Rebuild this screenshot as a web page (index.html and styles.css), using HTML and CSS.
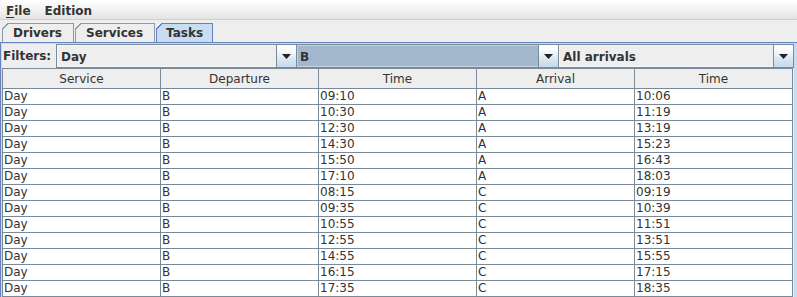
FILE: index.html
```html
<!DOCTYPE html>
<html lang="en">
<head>
    <meta charset="UTF-8">
    <title>Tasks</title>
    <link rel="stylesheet" href="styles.css">
</head>
<body>
    <div class="menubar">
        <span class="menu"><u>F</u>ile</span>
        <span class="menu">Edition</span>
    </div>

    <div class="tabs">
        <div class="tab">Drivers</div>
        <div class="tab">Services</div>
        <div class="tab selected">Tasks</div>
    </div>

    <div class="panel">
        <div class="content-area">
            <div class="filters">
                <span class="filter-label">Filters:</span>
                <div class="combo combo-service">
                    <span class="combo-text">Day</span>
                    <span class="combo-arrow"><svg width="9" height="5" viewBox="0 0 9 5"><path d="M0 0h9L4.5 5z" fill="#222"/></svg></span>
                </div>
                <div class="combo combo-departure focused">
                    <span class="combo-text">B</span>
                    <span class="combo-arrow"><svg width="9" height="5" viewBox="0 0 9 5"><path d="M0 0h9L4.5 5z" fill="#222"/></svg></span>
                </div>
                <div class="combo combo-arrival">
                    <span class="combo-text">All arrivals</span>
                    <span class="combo-arrow"><svg width="9" height="5" viewBox="0 0 9 5"><path d="M0 0h9L4.5 5z" fill="#222"/></svg></span>
                </div>
            </div>

            <table class="task-table">
                <colgroup>
                    <col><col><col><col><col>
                </colgroup>
                <thead>
                    <tr>
                        <th>Service</th>
                        <th>Departure</th>
                        <th>Time</th>
                        <th>Arrival</th>
                        <th>Time</th>
                    </tr>
                </thead>
                <tbody>
                    <tr><td>Day</td><td>B</td><td>09:10</td><td>A</td><td>10:06</td></tr>
                    <tr><td>Day</td><td>B</td><td>10:30</td><td>A</td><td>11:19</td></tr>
                    <tr><td>Day</td><td>B</td><td>12:30</td><td>A</td><td>13:19</td></tr>
                    <tr><td>Day</td><td>B</td><td>14:30</td><td>A</td><td>15:23</td></tr>
                    <tr><td>Day</td><td>B</td><td>15:50</td><td>A</td><td>16:43</td></tr>
                    <tr><td>Day</td><td>B</td><td>17:10</td><td>A</td><td>18:03</td></tr>
                    <tr><td>Day</td><td>B</td><td>08:15</td><td>C</td><td>09:19</td></tr>
                    <tr><td>Day</td><td>B</td><td>09:35</td><td>C</td><td>10:39</td></tr>
                    <tr><td>Day</td><td>B</td><td>10:55</td><td>C</td><td>11:51</td></tr>
                    <tr><td>Day</td><td>B</td><td>12:55</td><td>C</td><td>13:51</td></tr>
                    <tr><td>Day</td><td>B</td><td>14:55</td><td>C</td><td>15:55</td></tr>
                    <tr><td>Day</td><td>B</td><td>16:15</td><td>C</td><td>17:15</td></tr>
                    <tr><td>Day</td><td>B</td><td>17:35</td><td>C</td><td>18:35</td></tr>
                </tbody>
            </table>
        </div>
    </div>
</body>
</html>
```

FILE: styles.css
```css
body {
    margin: 0;
    font-family: 'DejaVu Sans', Verdana, sans-serif;
    font-size: 12px;
    color: #333;
    background-color: #eeeeee;
    height: 297px;
    overflow: hidden;
}

.menubar {
    display: flex;
    align-items: center;
    height: 19px;
    padding-left: 0;
    background: linear-gradient(#ffffff, #e4e4e4);
    border-bottom: 1px solid #cfcfcf;
}

.menu {
    font-weight: bold;
    padding: 2px 7px 0 6px;
    margin-right: 1px;
}

.menu u {
    text-decoration-thickness: 1px;
    text-underline-offset: 2px;
}

.tabs {
    display: flex;
    padding: 3px 0 0 2px;
    height: 19px;
}

.tab {
    position: relative;
    height: 18px;
    line-height: 18px;
    padding: 0 11px 0 10px;
    margin-right: 1px;
    font-weight: bold;
    border: 1px solid #8e9aa5;
    border-bottom: none;
    background: #eeeeee;
}

/* cut top-left corner like the metal tabs */
.tab::before {
    content: "";
    position: absolute;
    left: -1px;
    top: -1px;
    width: 6px;
    height: 6px;
    background: linear-gradient(to bottom right, #eeeeee 0, #eeeeee 45%, #8e9aa5 46%, #8e9aa5 60%, transparent 61%);
}

.tab.selected {
    background: #c8ddf2;
    border-color: #6382bf;
    padding: 0 9px 0 9px;
}

.tab.selected::before {
    background: linear-gradient(to bottom right, #eeeeee 0, #eeeeee 45%, #6382bf 46%, #6382bf 60%, transparent 61%);
}

.panel {
    border-top: 1px solid #6382bf;
    border-left: 1px solid #6382bf;
}

.content-area {
    border-top: 1px solid #c8ddf2;
    border-left: 1px solid #c8ddf2;
    border-right: 3px solid #c8ddf2;
    margin-right: 0;
}

.filters {
    display: flex;
    align-items: stretch;
    height: 24px;
}

.filter-label {
    width: 53px;
    font-weight: bold;
    line-height: 24px;
    padding-left: 1px;
}

.combo {
    display: flex;
    box-sizing: border-box;
    border: 1px solid #7a8a99;
    background: #eeeeee;
    font-weight: bold;
}

.combo-service {
    width: 241px;
}

.combo-departure {
    width: 262px;
    border-left: none;
}

.combo-arrival {
    width: 235px;
    border-left: none;
}

.combo-text {
    flex: 1;
    line-height: 22px;
    padding-left: 3px;
    border: 1px solid #f8f8f8;
    border-right: none;
}

.combo.focused .combo-text {
    background: #a3b8cc;
    border-color: #c4d2df;
    padding-left: 2px;
}

.combo-arrow {
    display: flex;
    align-items: center;
    justify-content: center;
    width: 19px;
    border-left: 1px solid #7a8a99;
    background: linear-gradient(#ffffff 0%, #f4f8fb 30%, #dde8f3 60%, #c5d8ea 100%);
}

.task-table {
    table-layout: fixed;
    width: 791px;
    border-collapse: separate;
    border-spacing: 0;
    border-left: 1px solid #7a8a99;
    background: #ffffff;
}

.task-table th {
    height: 21px;
    padding: 1px 0 0;
    font-weight: normal;
    text-align: center;
    background: #eeeeee;
    border-right: 1px solid #7a8a99;
    border-bottom: 1px solid #7a8a99;
    border-top: 1px solid #7a8a99;
    box-sizing: border-box;
}

.task-table td {
    height: 16px;
    padding: 0 0 0 1px;
    line-height: 15px;
    color: #333;
    white-space: nowrap;
    overflow: hidden;
    border-right: 1px solid #7a8a99;
    border-bottom: 1px solid #7a8a99;
    box-sizing: border-box;
}
```
